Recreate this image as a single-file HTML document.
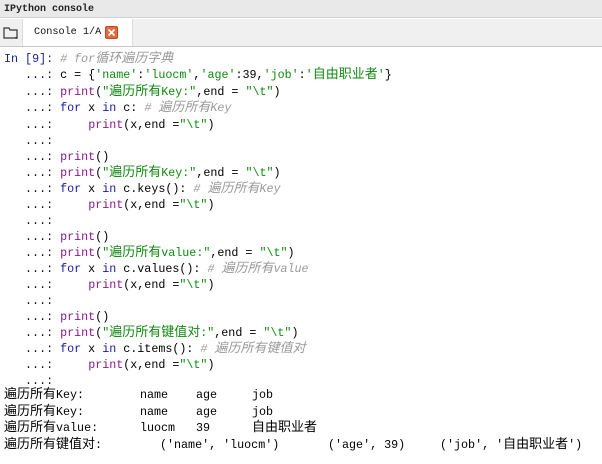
<!DOCTYPE html>
<html><head><meta charset="utf-8"><style>
body{margin:0;width:602px;height:464px;background:#fff;overflow:hidden;position:relative;font-family:"Liberation Mono","Noto Sans CJK SC",monospace;}
#title{position:absolute;left:0;top:0;width:602px;height:18px;background:#e9e9e9;border-bottom:1px solid #d0d0d0;font-family:"Liberation Mono",monospace;font-size:10px;font-weight:bold;color:#222;line-height:20px;padding-left:4px;box-sizing:border-box}
#tabbar{position:absolute;left:0;top:19px;width:602px;height:27px;background:#f0f0f0;border-bottom:1px solid #c8c8c8}
#tab{position:absolute;left:22px;top:0;width:109px;height:27px;background:#fff;border-left:1px solid #ddd;border-right:1px solid #ddd;font-family:"Liberation Mono",monospace;font-size:10.2px;line-height:27px;color:#111}
.l{position:absolute;left:4px;font-size:11.7px;white-space:pre;line-height:16px;color:#000}
.l,.o{font-family:"Liberation Mono","Noto Sans CJK SC",monospace}
.z{font-size:13px}
.p{color:#101040}.n{color:#1a237e}.k{color:#1a1aa6}.f{color:#8a1a8a}.s{color:#108a10}.c{color:#999;font-style:italic}
.o{position:absolute;font-size:11.7px;white-space:pre;line-height:16px;color:#000}
</style></head><body>
<div id="title">IPython console</div>
<div id="tabbar">
<svg style="position:absolute;left:3px;top:7px" width="16" height="14" viewBox="0 0 16 14"><path d="M1 2h5l1 2h7v8H1z" fill="none" stroke="#333" stroke-width="1.2"/><path d="M12 11l1.5 2 1.5-2z" fill="#333"/></svg>
<div id="tab"><span style="position:absolute;left:11px">Console 1/A</span>
<svg style="position:absolute;left:82px;top:7px" width="13" height="13" viewBox="0 0 13 13"><rect x="0.5" y="0.5" width="12" height="12" rx="1.5" fill="#e46a3c" stroke="#c04a20"/><path d="M3.5 3.5l6 6M9.5 3.5l-6 6" stroke="#fff" stroke-width="1.8"/></svg></div>
</div>
<div class="l" style="top:51px"><span class="n">In [</span><span class="k">9</span><span class="n">]:</span> <span class="c"># for<span class="z">循环遍历字典</span></span></div>
<div class="l" style="top:67px"><span class="p">   ...:</span> c = {<span class="s">'name'</span>:<span class="s">'luocm'</span>,<span class="s">'age'</span>:39,<span class="s">'job'</span>:<span class="s">'<span class="z">自由职业者</span>'</span>}</div>
<div class="l" style="top:84px"><span class="p">   ...:</span> <span class="f">print</span>(<span class="s">"<span class="z">遍历所有</span>Key:"</span>,end = <span class="s">"\t"</span>)</div>
<div class="l" style="top:100px"><span class="p">   ...:</span> <span class="k">for</span> x <span class="k">in</span> c: <span class="c"># <span class="z">遍历所有</span>Key</span></div>
<div class="l" style="top:117px"><span class="p">   ...:</span>     <span class="f">print</span>(x,end =<span class="s">"\t"</span>)</div>
<div class="l" style="top:133px"><span class="p">   ...:</span></div>
<div class="l" style="top:149px"><span class="p">   ...:</span> <span class="f">print</span>()</div>
<div class="l" style="top:165px"><span class="p">   ...:</span> <span class="f">print</span>(<span class="s">"<span class="z">遍历所有</span>Key:"</span>,end = <span class="s">"\t"</span>)</div>
<div class="l" style="top:181px"><span class="p">   ...:</span> <span class="k">for</span> x <span class="k">in</span> c.keys(): <span class="c"># <span class="z">遍历所有</span>Key</span></div>
<div class="l" style="top:197px"><span class="p">   ...:</span>     <span class="f">print</span>(x,end =<span class="s">"\t"</span>)</div>
<div class="l" style="top:213px"><span class="p">   ...:</span></div>
<div class="l" style="top:229px"><span class="p">   ...:</span> <span class="f">print</span>()</div>
<div class="l" style="top:245px"><span class="p">   ...:</span> <span class="f">print</span>(<span class="s">"<span class="z">遍历所有</span>value:"</span>,end = <span class="s">"\t"</span>)</div>
<div class="l" style="top:261px"><span class="p">   ...:</span> <span class="k">for</span> x <span class="k">in</span> c.values(): <span class="c"># <span class="z">遍历所有</span>value</span></div>
<div class="l" style="top:277px"><span class="p">   ...:</span>     <span class="f">print</span>(x,end =<span class="s">"\t"</span>)</div>
<div class="l" style="top:293px"><span class="p">   ...:</span></div>
<div class="l" style="top:309px"><span class="p">   ...:</span> <span class="f">print</span>()</div>
<div class="l" style="top:325px"><span class="p">   ...:</span> <span class="f">print</span>(<span class="s">"<span class="z">遍历所有键值对</span>:"</span>,end = <span class="s">"\t"</span>)</div>
<div class="l" style="top:341px"><span class="p">   ...:</span> <span class="k">for</span> x <span class="k">in</span> c.items(): <span class="c"># <span class="z">遍历所有键值对</span></span></div>
<div class="l" style="top:357px"><span class="p">   ...:</span>     <span class="f">print</span>(x,end =<span class="s">"\t"</span>)</div>
<div class="l" style="top:373px"><span class="p">   ...:</span></div>
<div class="o" style="left:4px;top:387px"><span class="z">遍历所有</span>Key:</div><div class="o" style="left:140px;top:387px">name</div><div class="o" style="left:196px;top:387px">age</div><div class="o" style="left:252px;top:387px">job</div>
<div class="o" style="left:4px;top:404px"><span class="z">遍历所有</span>Key:</div><div class="o" style="left:140px;top:404px">name</div><div class="o" style="left:196px;top:404px">age</div><div class="o" style="left:252px;top:404px">job</div>
<div class="o" style="left:4px;top:420px"><span class="z">遍历所有</span>value:</div><div class="o" style="left:140px;top:420px">luocm</div><div class="o" style="left:196px;top:420px">39</div><div class="o" style="left:252px;top:420px"><span class="z">自由职业者</span></div>
<div class="o" style="left:4px;top:437px"><span class="z">遍历所有键值对</span>:</div><div class="o" style="left:160px;top:437px">('name', 'luocm')</div><div class="o" style="left:328px;top:437px">('age', 39)</div><div class="o" style="left:440px;top:437px">('job', '<span class="z">自由职业者</span>')</div>
</body></html>
